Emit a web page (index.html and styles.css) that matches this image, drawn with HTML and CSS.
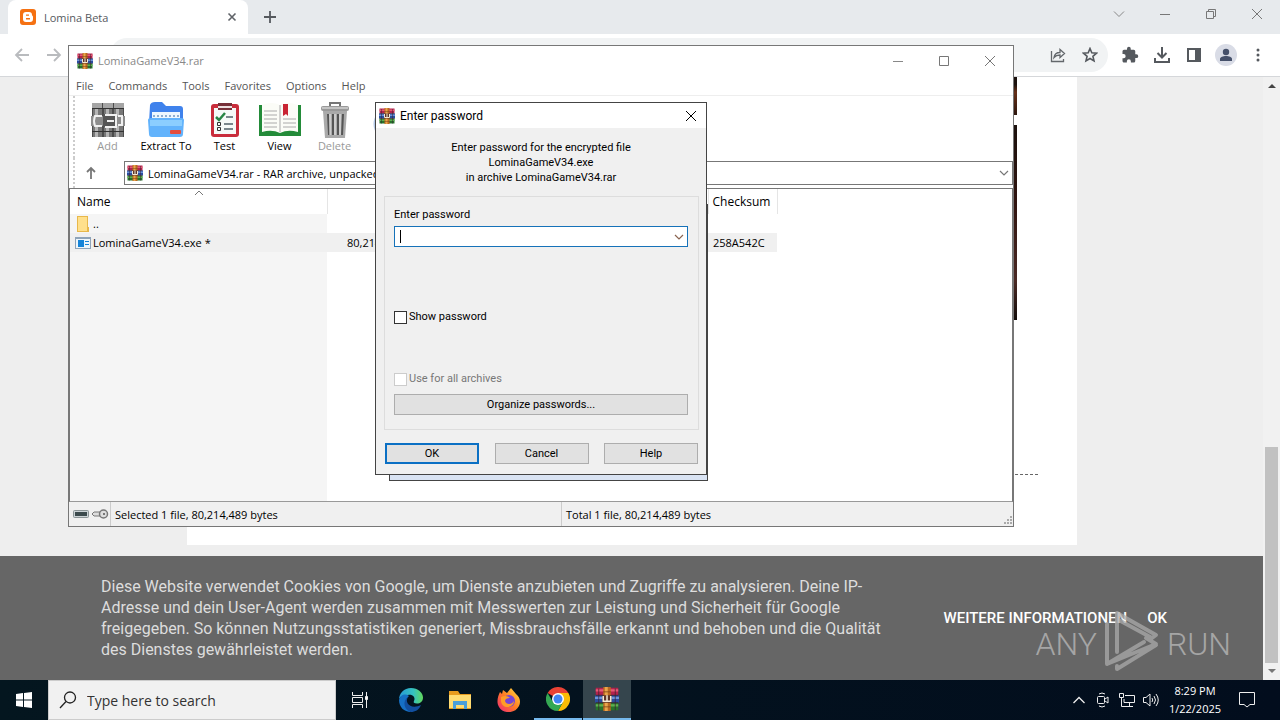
FILE: index.html
```html
<!DOCTYPE html>
<html lang="en">
<head>
<meta charset="utf-8">
<title>Lomina Beta</title>
<link rel="stylesheet" href="styles.css">
</head>
<body>
<svg class="defs" aria-hidden="true">
  <symbol id="rar" viewBox="0 0 32 32">
    <path fill="#b3234d" d="M1 1h30v10H1z"/><path fill="#e55a75" d="M1 3h30v3H1z"/>
    <path fill="#2b4c9e" d="M0 11h32v10H0z"/><path fill="#6d94d8" d="M0 13h32v3H0z"/>
    <path fill="#27732b" d="M1 21h30v10H1z"/><path fill="#5fb050" d="M1 23h30v3H1z"/>
    <path stroke="#3b2031" stroke-width="1" d="M1 11h30M1 21h30M5 2v29M27 2v29"/>
    <path fill="#b96821" d="M11 0h10v32H11z"/><path fill="#e9a54b" d="M13 0h4v32h-4z"/>
    <path fill="#75401b" d="M11 6h10v1H11zM11 26h10v1H11z"/>
    <path fill="#5c3529" d="M10 11h12v10H10z"/>
    <path fill="none" stroke="#f5ead5" stroke-width="2" d="M11 12v7h10v-7M16 11v8"/>
  </symbol>
  <symbol id="x" viewBox="0 0 12 12"><path d="M1 1l10 10M11 1L1 11" fill="none" stroke="currentColor"/></symbol>
  <symbol id="down" viewBox="0 0 12 12"><path d="M2 4l4 4 4-4" fill="none" stroke="currentColor" stroke-width="1.2"/></symbol>
</svg>

<main class="browser">
  <header class="tabstrip">
    <div class="tab">
      <svg class="i16" viewBox="0 0 16 16"><rect width="16" height="16" rx="3" fill="#f57112"/><path fill="#fff" fill-rule="evenodd" d="M6 3h3a3 3 0 0 1 3 3c0 1 1 .6 1 2v2a3 3 0 0 1-3 3H6a3 3 0 0 1-3-3V6a3 3 0 0 1 3-3zm0 2.500v1.300h3V5.500zM6 9v1.500h4V9z"/></svg>
      <span class="tab-title">Lomina Beta</span>
      <button class="plain tab-close" aria-label="Close tab"><svg width="10" height="10" viewBox="0 0 10 10"><path d="M1.500 1.500l7 7M8.500 1.500l-7 7" stroke="#5f6368" stroke-width="1.600"/></svg></button>
    </div>
    <button class="plain newtab" aria-label="New tab"><svg width="14" height="14" viewBox="0 0 14 14"><path d="M7 1v12M1 7h12" stroke="#55595e" stroke-width="1.800"/></svg></button>
    <div class="chrome-controls">
      <button class="plain" aria-label="Search tabs"><svg width="12" height="12" viewBox="0 0 12 12"><path d="M1 3.500l5 5 5-5" fill="none" stroke="#888"/></svg></button>
      <button class="plain" aria-label="Minimize"><svg width="12" height="12"><path d="M1 6.500h10" stroke="#777"/></svg></button>
      <button class="plain" aria-label="Restore"><svg width="12" height="12" viewBox="0 0 12 12"><path d="M1.500 3.500h7v7h-7zM3.500 3.500v-2h7v7h-2" fill="none" stroke="#777"/></svg></button>
      <button class="plain dim" aria-label="Close"><svg width="12" height="12"><use href="#x"/></svg></button>
    </div>
  </header>
  <nav class="toolbar">
    <div class="history">
      <button class="plain" aria-label="Back"><svg width="16" height="16" viewBox="0 0 16 16"><path d="M15 8H2M8 2L2 8l6 6" fill="none" stroke="#b9bbbe" stroke-width="1.800"/></svg></button>
      <button class="plain" aria-label="Forward"><svg width="16" height="16" viewBox="0 0 16 16"><path d="M1 8h13M8 2l6 6-6 6" fill="none" stroke="#b9bbbe" stroke-width="1.800"/></svg></button>
    </div>
    <div class="omnibox">
      <button class="plain" aria-label="Share"><svg width="16" height="16" viewBox="0 0 16 16"><path d="M1.500 4v10.500h12V12M4 10.500C4.500 7 7 5.500 10 5.500V2.500l4.500 4-4.500 4V8C7.500 8 5.500 8.700 4 10.500z" fill="none" stroke="#63676b" stroke-width="1.300"/></svg></button>
      <button class="plain" aria-label="Bookmark"><svg width="16" height="16" viewBox="0 0 16 16"><path d="M8 1.500l1.800 4.300 4.700.4-3.600 3.100 1.100 4.600L8 11.500l-4 2.400 1.100-4.600-3.600-3.100 4.700-.4z" fill="none" stroke="#55595e" stroke-width="1.600"/></svg></button>
    </div>
    <div class="tools">
      <button class="plain" aria-label="Extensions"><svg width="18" height="18" viewBox="0 0 24 24"><path fill="#55595e" d="M20.500 11H19V7a2 2 0 0 0-2-2h-4V3.500a2.500 2.500 0 0 0-5 0V5H4a2 2 0 0 0-2 2v3.800h1.500a2.700 2.700 0 0 1 0 5.400H2V20c0 1.100.9 2 2 2h3.800v-1.500a2.700 2.700 0 0 1 5.400 0V22H17a2 2 0 0 0 2-2v-4h1.500a2.500 2.500 0 0 0 0-5z"/></svg></button>
      <button class="plain" aria-label="Downloads"><svg width="18" height="18" viewBox="0 0 18 18"><path d="M9 1v10M4.500 7L9 11.500 13.500 7M2 12v4h14v-4" fill="none" stroke="#55595e" stroke-width="2"/></svg></button>
      <button class="plain" aria-label="Side panel"><svg width="16" height="16" viewBox="0 0 16 16"><path d="M2 2h12v12H2z" fill="none" stroke="#55595e" stroke-width="2"/><path fill="#55595e" d="M9 1h6v14H9z"/></svg></button>
      <button class="plain" aria-label="Profile"><svg width="22" height="22" viewBox="0 0 22 22"><circle cx="11" cy="11" r="11" fill="#d9dce6"/><circle cx="11" cy="8" r="3.200" fill="#45506a"/><path fill="#45506a" d="M5 17v-2c0-4 12-4 12 0v2z"/></svg></button>
      <button class="plain" aria-label="Menu"><svg width="16" height="16" viewBox="0 0 16 16" fill="#55595e"><circle cx="8" cy="3" r="1.500"/><circle cx="8" cy="8" r="1.500"/><circle cx="8" cy="13" r="1.500"/></svg></button>
    </div>
  </nav>
  <div class="viewport">
    <div class="site">
      <div class="sheet">
        <div class="photos"><i class="photo small"></i><i class="photo"></i></div>
        <hr class="dashes">
      </div>
      <section class="cookies">
        <p>Diese Website verwendet Cookies von Google, um Dienste anzubieten und Zugriffe zu analysieren. Deine IP-Adresse und dein User-Agent werden zusammen mit Messwerten zur Leistung und Sicherheit für Google freigegeben. So können Nutzungsstatistiken generiert, Missbrauchsfälle erkannt und behoben und die Qualität des Dienstes gewährleistet werden.</p>
        <div class="cookie-links"><a href="#info">WEITERE INFORMATIONEN</a><a href="#ok">OK</a></div>
      </section>
    </div>
    <div class="scrollbar">
      <svg width="17" height="17"><path fill="#444" d="M5 11l4-4 4 4z"/></svg>
      <div class="track"><div class="thumb"></div></div>
      <svg width="17" height="17"><path fill="#777" d="M5 6h8l-4 4z"/></svg>
    </div>
  </div>
</main>

<section class="winrar" aria-label="LominaGameV34.rar">
  <header class="titlebar">
    <svg class="i16"><use href="#rar"/></svg><span>LominaGameV34.rar</span>
    <div class="win-controls">
      <button class="plain" aria-label="Minimize window"><svg width="12" height="12"><path d="M1 6.500h10" stroke="#888"/></svg></button>
      <button class="plain" aria-label="Maximize window"><svg width="12" height="12"><path d="M1.500 1.500h9v9h-9z" fill="none" stroke="#777"/></svg></button>
      <button class="plain dim" aria-label="Close window"><svg width="12" height="12"><use href="#x"/></svg></button>
    </div>
  </header>
  <nav class="menu">
    <button class="plain">File</button><button class="plain">Commands</button><button class="plain">Tools</button><button class="plain">Favorites</button><button class="plain">Options</button><button class="plain">Help</button>
  </nav>
  <div class="actions">
    <button class="plain action off"><svg width="34" height="36" viewBox="0 0 34 36"><path fill="#4c4c4c" d="M1 1h32v34H1z"/><path fill="#777" d="M2 1h9v34H2zM13 1h8v34h-8zM23 1h9v34h-9z"/><path fill="#b5b5b5" d="M4 1h3v34H4zM15 1h3v34h-3zM25 1h3v34h-3z"/><path fill="#a5a5a5" d="M1 1h10v5H1zM12 1h10v5H12zM23 1h10v5H23z"/><path fill="#333" d="M1 6h32v1H1zM1 29h32v1H1z"/><path fill="#8d8d8d" d="M0 14h34v10H0z"/><path fill="#555" d="M12 12h13v13H12z"/><path stroke="#f0f0f0" stroke-width="2" fill="none" d="M11 14H4q-2 5 0 10h7M14 13h11v12H14M16 19h7M27 14h4v9h-4"/></svg>Add</button>
    <button class="plain action wide"><svg width="38" height="36" viewBox="0 0 38 36"><path fill="#3f82ec" d="M3 3q1-3 5-3h7l4 4h14q3 0 3 3v14H2z"/><path fill="#edf7ff" d="M5 10h28v10H5z"/><path stroke="#8faed0" stroke-dasharray="2 2" stroke-width="2" d="M6 14h26"/><path fill="#62b3fc" d="M1 18q0-2 3-2h30q3 0 3 2l-1 14q0 3-3 3H5q-3 0-3-3z"/><path fill="#8bceff" d="M3 18h32v6H3z"/><rect x="23" y="28" width="11" height="4" rx="1" fill="#e44e3e"/></svg>Extract To</button>
    <button class="plain action"><svg width="30" height="36" viewBox="0 0 30 36"><rect x="1" y="2" width="28" height="33" rx="3" fill="#c92d3c"/><path fill="#f6faf8" d="M4 6h22v26H4z"/><path fill="#773039" d="M8 1h14v7H8z"/><path stroke="#eedfe0" stroke-width="2" d="M8 5h14"/><path fill="none" stroke="#288646" stroke-width="2.500" d="M6 15l3 3 6-7"/><path stroke="#526168" stroke-width="1.500" d="M16 15h7M14 22h9M14 27h9"/><path fill="none" stroke="#333" d="M7.500 20.500h3v3h-3zM7.500 25.500h3v3h-3z"/></svg>Test</button>
    <button class="plain action"><svg width="42" height="36" viewBox="0 0 42 36"><path fill="#238b39" d="M0 3h42v31H0z"/><path fill="#fbfcf7" d="M3 3q10-4 18 0 8-4 18 0v27q-10-3-18 1-8-4-18-1z"/><path stroke="#aaa" stroke-width="1" d="M5 9h13M5 13h13M5 17h13M5 21h13M5 25h13M24 17h13M24 21h13M24 25h13M21 3v27"/><path fill="#c92534" d="M24 2h5v12l-2-2-3 2z"/></svg>View</button>
    <button class="plain action off"><svg width="30" height="36" viewBox="0 0 30 36"><path fill="none" stroke="#777" stroke-width="2" d="M10 4V1h10v3"/><rect x="1" y="4" width="28" height="5" rx="2" fill="#999"/><path fill="#aaa" d="M3 9h24l-2 27H5z"/><path stroke="#555" stroke-width="2" d="M8 12l1 21M13 12v21M18 12v21M23 12l-1 21"/><path stroke="#eee" d="M10 12v21M15 12v21M20 12v21M2 6h26"/></svg>Delete</button>
    <button class="plain action off" aria-label="Find"><svg width="36" height="36"><circle cx="17" cy="15" r="14" fill="#2d72d9" stroke="#b4c9e8" stroke-width="3"/></svg></button>
  </div>
  <div class="address-row">
    <button class="plain up" aria-label="Up one level"><svg width="12" height="14" viewBox="0 0 12 14"><path d="M6 13V2M2 6l4-4 4 4" fill="none" stroke="#777" stroke-width="1.800"/></svg></button>
    <div class="address"><svg class="i16"><use href="#rar"/></svg><input aria-label="Archive path" value="LominaGameV34.rar - RAR archive, unpacked size 80,214,489 bytes"><button class="plain dim" aria-label="Path history"><svg width="12" height="12"><use href="#down"/></svg></button></div>
  </div>
  <div class="list">
    <svg class="sort" width="10" height="6"><path d="M1 5l4-4 4 4" fill="none" stroke="#777"/></svg>
    <table>
      <colgroup><col class="c-name"><col class="c-size"><col class="c-rest"><col class="c-sum"></colgroup>
      <thead><tr><th>Name</th><th></th><th></th><th class="sum">Checksum</th></tr></thead>
      <tbody>
        <tr><td><div class="file"><svg width="16" height="16"><path fill="#e8b84b" d="M2 0h11v11h1v5H2z"/><path fill="#ffe08c" d="M3 1h9v14H3z"/></svg>..</div></td><td></td><td></td><td></td></tr>
        <tr class="selected"><td><div class="file"><svg width="16" height="16"><path fill="#8fa4b9" d="M0 2h16v12H0z"/><path fill="#eef6fb" d="M1 4h14v9H1z"/><path fill="#1684d8" d="M3 5h6v7H3z"/><path stroke="#1684d8" d="M10 6.500h4M10 9.500h4"/></svg>LominaGameV34.exe *</div></td><td class="size">80,214,489</td><td></td><td>258A542C</td></tr>
      </tbody>
    </table>
  </div>
  <footer class="status">
    <div class="status-icons">
      <svg width="16" height="8"><rect x=".5" y=".5" width="15" height="7" rx="1" fill="#ccd3d6" stroke="#8b9496"/><path fill="#3c4a4d" d="M2 2h12v4H2z"/></svg>
      <svg width="17" height="12"><path d="M10 4H2L0 6l2 2h8" fill="#ddd" stroke="#777"/><circle cx="11.500" cy="6" r="4" fill="#ddd" stroke="#777" stroke-width="1.500"/><circle cx="12" cy="6" r="1" fill="#555"/></svg>
    </div>
    <div class="status-cell selection">Selected 1 file, 80,214,489 bytes</div>
    <div class="status-cell">Total 1 file, 80,214,489 bytes</div>
    <svg class="grip" width="10" height="10" fill="#aaa"><path d="M7 0h2v2H7zM7 3h2v2H7zM7 6h2v2H7zM4 3h2v2H4zM4 6h2v2H4zM1 6h2v2H1z"/></svg>
  </footer>
</section>

<div class="progress-window"></div>

<form class="dialog" role="dialog" aria-labelledby="dlg-title">
  <header class="dialog-title"><svg class="i16"><use href="#rar"/></svg><span id="dlg-title">Enter password</span><button type="button" class="plain" aria-label="Close dialog"><svg width="12" height="12"><use href="#x"/></svg></button></header>
  <p class="message">Enter password for the encrypted file<br>LominaGameV34.exe<br>in archive LominaGameV34.rar</p>
  <div class="group">
    <label for="pw">Enter password</label>
    <div class="combo"><input id="pw" type="text"><i class="caret"></i><button type="button" class="plain" aria-label="Saved passwords"><svg width="12" height="12"><use href="#down"/></svg></button></div>
    <label class="check show"><input type="checkbox">Show password</label>
    <label class="check all"><input type="checkbox" disabled>Use for all archives</label>
    <button type="button" class="push organize">Organize passwords...</button>
  </div>
  <div class="buttons"><button type="button" class="push default">OK</button><button type="button" class="push">Cancel</button><button type="button" class="push">Help</button></div>
</form>

<div class="watermark"><span>ANY</span>
  <svg width="56" height="62" viewBox="0 0 56 62" fill="none" stroke="#aaa" stroke-width="4" stroke-linejoin="round" stroke-linecap="round"><path d="M13 42V3l39 22-4 3L13 9M3 14v40l49-20-10-6M3 54l37-22M3 54V14M13 56v3l39-24"/></svg>
  <span>RUN</span></div>

<footer class="taskbar">
  <button class="plain start" aria-label="Start"><svg width="16" height="16" fill="#fff"><path d="M0 2l7-1v6.500H0zM8 1l8-1v7.500H8zM0 8.500h7V15l-7-1zM8 8.500h8V16l-8-1z"/></svg></button>
  <label class="search"><svg width="18" height="18" viewBox="0 0 18 18"><circle cx="11" cy="6.500" r="5.500" fill="none" stroke="#222" stroke-width="1.300"/><path d="M7 10.500L1 17" stroke="#222" stroke-width="1.300"/></svg><input type="text" placeholder="Type here to search" aria-label="Type here to search"></label>
  <div class="apps">
    <button class="plain app" aria-label="Task View"><svg width="18" height="16" fill="none" stroke="#eee"><path d="M1.500 0v3.500h10V0M1.500 16v-3.500h10V16M1.500 5.500h10v5h-10zM15.500 0v16"/><path fill="#fff" d="M14.500 4.500h2v3h-2z"/></svg></button>
    <button class="plain app" aria-label="Edge"><svg width="24" height="24" viewBox="0 0 24 24"><defs><linearGradient id="eg" x1="0" x2="1"><stop stop-color="#279bd8"/><stop offset=".6" stop-color="#35c2c0"/><stop offset="1" stop-color="#62d85b"/></linearGradient></defs><path fill="url(#eg)" d="M0 12C0 5 5 0 12 0s12 5 12 9.500c0 4-3 6-6 6s-4-1-3-2.500c2-4-2-7-6-6-5 0-9 2-9 5z"/><path fill="#1670c5" d="M0 12c1-5 6-7 10-4-5 4-4 11 2 16C5 24 0 19 0 12z"/><path fill="#124f9f" d="M9 9c-4 6 3 13 13 8-2 5-6 7-10 7C5 22 3 13 9 9z"/></svg></button>
    <button class="plain app" aria-label="File Explorer"><svg width="22" height="20"><path fill="#e79b1e" d="M0 1h9l2 3h11v15H0z"/><path fill="#ffdc72" d="M0 5h22v13H0z"/><path fill="#4a9fda" d="M4 11h14v8h-3v-4H7v4H4z"/></svg></button>
    <button class="plain app" aria-label="Firefox"><svg width="24" height="24" viewBox="0 0 24 24"><defs><linearGradient id="fg" x1="1" x2="0" y2="1"><stop stop-color="#ffe33f"/><stop offset=".5" stop-color="#ff7c25"/><stop offset="1" stop-color="#ef2479"/></linearGradient></defs><path fill="url(#fg)" d="M5 6l1-4 4 3 4-5 5 6c4 3 5 8 3 12-4 8-16 8-20 1C-1 14 1 8 3 4z"/><circle cx="12" cy="13" r="6" fill="#7545d6"/><path fill="#ff9c27" d="M4 9c4-2 7-1 9 1-3 0-5 1-5 3 1 4 7 4 9 0 0 7-12 9-13 0z"/></svg></button>
    <button class="plain app open" aria-label="Chrome"><svg width="24" height="24" viewBox="0 0 24 24"><path fill="#e94235" d="M12 12L1.600 6a12 12 0 0 1 20.800 0z"/><path fill="#fbbc05" d="M12 12V6h10.400A12 12 0 0 1 12 24l5-9z"/><path fill="#34a853" d="M12 12l5 3-5 9A12 12 0 0 1 1.600 6l5 8.500z"/><circle cx="12" cy="12" r="6" fill="#fff"/><circle cx="12" cy="12" r="4.500" fill="#4285f4"/></svg></button>
    <button class="plain app open active" aria-label="WinRAR"><svg width="24" height="24"><use href="#rar"/></svg></button>
  </div>
  <div class="tray">
    <button class="plain" aria-label="Show hidden icons"><svg width="18" height="14" viewBox="-2 0 18 14"><path d="M1.500 10L7 4.500l5.500 5.500" fill="none" stroke="#eee" stroke-width="1.300"/></svg></button>
    <svg width="18" height="16" viewBox="-2 0 18 16" fill="none" stroke="#eee"><path d="M3 2q3-2 6 0M3 14q3 2 6 0"/><rect x="1.500" y="4.500" width="7" height="7" rx="1"/><path d="M9 7l3-2v6L9 9"/></svg>
    <svg width="18" height="16" viewBox="-1 0 18 16" fill="none" stroke="#eee"><path d="M6 3.500h9.500v7H5V7M10.500 11v3M6 14.500h8M.5 1.500h4v4h-4zM2.500 6v8.500H6"/></svg>
    <svg width="18" height="16" fill="none" stroke="#eee"><path d="M1.500 5.500H4l4-3.500v12l-4-3.500H1.500zM10 6q1.500 2 0 4M12 4q3 4 0 8M14 2q4.500 6 0 12"/></svg>
    <div class="clock"><span>8:29 PM</span><span>1/22/2025</span></div>
    <button class="plain" aria-label="Notifications"><svg width="18" height="18"><path d="M1.500 1.500h15v12H12L9 16l-3-2.500H1.500z" fill="none" stroke="#eee"/></svg></button>
  </div>
</footer>
</body>
</html>
```
FILE: styles.css
```css
* { box-sizing: border-box; }
html, body { height: 100%; }
body { margin: 0; display: flex; flex-direction: column; position: relative; overflow: hidden; font-family: "Open Sans", "Noto Sans", sans-serif; font-size: 11px; color: #000; }
.defs { position: absolute; width: 0; height: 0; }
svg { display: block; flex: none; }
input, button { font: inherit; color: inherit; }
.plain { border: 0; padding: 0; background: none; display: flex; align-items: center; justify-content: center; }
.i16 { width: 16px; height: 16px; }
.plain.dim { color: #777; }

/* Browser */
.browser { flex: 1; min-height: 0; display: flex; flex-direction: column; }
.tabstrip { height: 34px; display: flex; align-items: center; background: #e7eaed; padding-left: 8px; }
.tab { width: 240px; height: 34px; display: flex; align-items: center; gap: 8px; padding: 0 10px 0 12px; background: #fff; border-radius: 8px 8px 0 0; color: #55595e; }
.tab-title { flex: 1; }
.tab-close { width: 12px; }
.newtab { margin-left: 15px; }
.chrome-controls { margin-left: auto; display: flex; gap: 34px; padding: 0 17px 6px 0; }
.toolbar { height: 43px; display: flex; align-items: center; padding: 0 6px 0 14px; background: #fff; border-bottom: 1px solid #d5d7da; }
.history { display: flex; gap: 16px; }
.omnibox { flex: 1; height: 34px; margin: 0 6px 0 48px; border-radius: 17px; background: #f1f3f4; display: flex; align-items: center; justify-content: flex-end; gap: 16px; padding-right: 10px; }
.tools { display: flex; align-items: center; }
.tools button { width: 32px; }
.viewport { flex: 1; min-height: 0; display: flex; background: #eee; }
.site { flex: 1; display: flex; flex-direction: column; align-items: center; }
.sheet { flex: 1; width: 890px; margin: 0 0 11px; background: #fff; display: flex; flex-direction: column; padding-right: 39px; }
.photos { display: flex; flex-direction: column; align-items: flex-end; gap: 10px; padding-right: 21px; }
.photo { width: 10px; height: 195px; background: linear-gradient(#1c120e, #30140f 40%, #4a2924 80%, #120b08); }
.photo.small { height: 38px; background: linear-gradient(#1c120e 20%, #673018 40%, #2c160d); }
.dashes { width: 100%; margin: 154px 0 0; border: 0; border-top: 1px dashed #666; }
.cookies { align-self: stretch; background: #666; color: #ddd; padding: 20px 96px 20px 101px; display: flex; align-items: center; justify-content: space-between; font: 16px/21px Roboto, sans-serif; }
.cookies p { margin: 0; width: 780px; }
.cookie-links { display: flex; gap: 20px; white-space: nowrap; }
.cookie-links a { color: #fff; text-decoration: none; font-weight: 500; font-size: 15px; }
.scrollbar { width: 17px; display: flex; flex-direction: column; background: #f1f1f1; }
.track { flex: 1; display: flex; align-items: flex-end; padding: 0 2px; }
.thumb { flex: 1; height: 38%; background: #c1c1c1; }

/* Archive window */
.winrar { position: absolute; left: 68px; right: 266px; top: 45px; bottom: 193px; display: flex; flex-direction: column; background: #fff; border: 1px solid #777; }
.titlebar { height: 29px; display: flex; align-items: center; gap: 5px; padding: 0 17px 0 8px; color: #888; }
.win-controls { margin-left: auto; display: flex; gap: 34px; }
.menu { height: 21px; display: flex; gap: 15px; padding-left: 7px; border-bottom: 1px solid #eee; color: #555; }
.actions { height: 62px; display: flex; align-items: center; margin-left: 4px; padding-left: 5px; border-left: 2px dotted #ccc; }
.action { width: 55px; flex-direction: column; line-height: 15px; }
.action.wide { width: 62px; }
.action.off { color: #999; }
.address-row { height: 30px; display: flex; align-items: center; margin-left: 4px; border-left: 2px dotted #ccc; }
.up { width: 32px; }
.address { flex: 1; height: 24px; margin-left: 17px; display: flex; align-items: center; gap: 5px; padding: 0 2px; border: 1px solid #777; }
.address input { flex: 1; border: 0; padding: 0; background: none; outline: 0; }
.list { flex: 1; min-height: 0; position: relative; border: 1px solid #777; border-bottom-color: #999; background: linear-gradient(#f5f5f5, #f5f5f5) 0 25px / 257px 100% no-repeat; }
.sort { position: absolute; left: 124px; top: 1px; }
table { border-collapse: collapse; table-layout: fixed; width: 707px; }
.c-name { width: 257px; } .c-size { width: 81px; } .c-rest { width: 300px; } .c-sum { width: 69px; }
th { height: 25px; padding: 0 7px; text-align: left; font-weight: 400; font-size: 12px; border-right: 1px solid #e5e5e5; background: #fff; }
th.sum { padding: 0 4px; }
td { height: 19px; padding: 0 5px; white-space: nowrap; }
.file { display: flex; align-items: center; gap: 2px; }
.size { text-align: right; }
.selected { background: #f0f0f0; }
.status { height: 24px; display: flex; align-items: center; background: #f0f0f0; }
.status-icons { width: 41px; display: flex; align-items: center; gap: 3px; padding-left: 4px; }
.status-cell { flex: 1; padding: 3px 0 2px 4px; line-height: 19px; border-left: 1px solid #ccc; }
.status-cell.selection { flex: none; width: 451px; }
.grip { align-self: flex-end; }

/* Password dialog */
.progress-window { position: absolute; left: 389px; top: 204px; width: 319px; height: 277px; background: #d9e3f3; border: 1px solid #444; }
.dialog { position: absolute; left: 375px; top: 102px; width: 332px; padding-bottom: 10px; background: #f0f0f0; border: 1px solid #444; font-family: Roboto, sans-serif; }
.dialog-title { height: 25px; display: flex; align-items: center; gap: 5px; padding: 0 9px 0 3px; background: #fff; font-size: 12px; line-height: 14px; }
.dialog-title button { margin-left: auto; }
.message { margin: 12px 0 11px; text-align: center; line-height: 15px; }
.group { margin: 0 7px 0 8px; height: 234px; padding: 10px 10px 14px 9px; display: flex; flex-direction: column; border: 1px solid #ddd; line-height: 16px; }
.combo { position: relative; height: 21px; margin-top: 3px; display: flex; align-items: center; padding-right: 2px; background: #fff; border: 1px solid #1672b9; color: #8a6450; }
.combo input { flex: 1; min-width: 0; height: 17px; border: 0; padding: 0 5px; outline: 0; background: none; }
.caret { position: absolute; left: 5px; top: 3px; width: 1px; height: 13px; background: #000; }
.check { display: flex; align-items: center; gap: 2px; }
.check input { appearance: none; width: 13px; height: 13px; margin: 0; border: 1px solid #333; background: #fff; }
.show { margin-top: 62px; }
.all { margin-top: 46px; color: #777; }
.all input { border-color: #ccc; }
.push { width: 94px; height: 21px; padding: 0; background: #e1e1e1; border: 1px solid #adadad; }
.push.organize { width: 100%; margin-top: 7px; }
.push.default { border: 2px solid #0b70c4; }
.buttons { display: flex; justify-content: space-between; padding: 13px 8px 0 9px; }

.watermark { position: absolute; right: 49px; bottom: 48px; display: flex; align-items: center; gap: 7px; opacity: .75; color: #bbb; font: 300 32px/32px Roboto, sans-serif; }
.watermark span { padding-top: 6px; }

/* Taskbar */
.taskbar { height: 40px; display: flex; background: linear-gradient(90deg, #04161f, #020d1d); color: #fff; }
.start { width: 48px; }
.search { width: 288px; display: flex; align-items: center; gap: 10px; padding-left: 10px; background: #f1f1f1; border: 1px solid #ccc; }
.search input { flex: 1; border: 0; outline: 0; background: none; font-size: 14px; padding: 0; }
.search input::placeholder { color: #333; opacity: 1; }
.apps { display: flex; gap: 1px; }
.app { width: 48px; }
.app:first-child { margin-right: 2px; }
.open { border-bottom: 2px solid #76b9ed; }
.active { background: #35454d; }
.tray { margin-left: auto; display: flex; align-items: center; gap: 6px; padding-right: 24px; }
.clock { width: 58px; display: flex; flex-direction: column; align-items: center; line-height: 18px; }
.tray > button:last-child { margin-left: 8px; }
```
